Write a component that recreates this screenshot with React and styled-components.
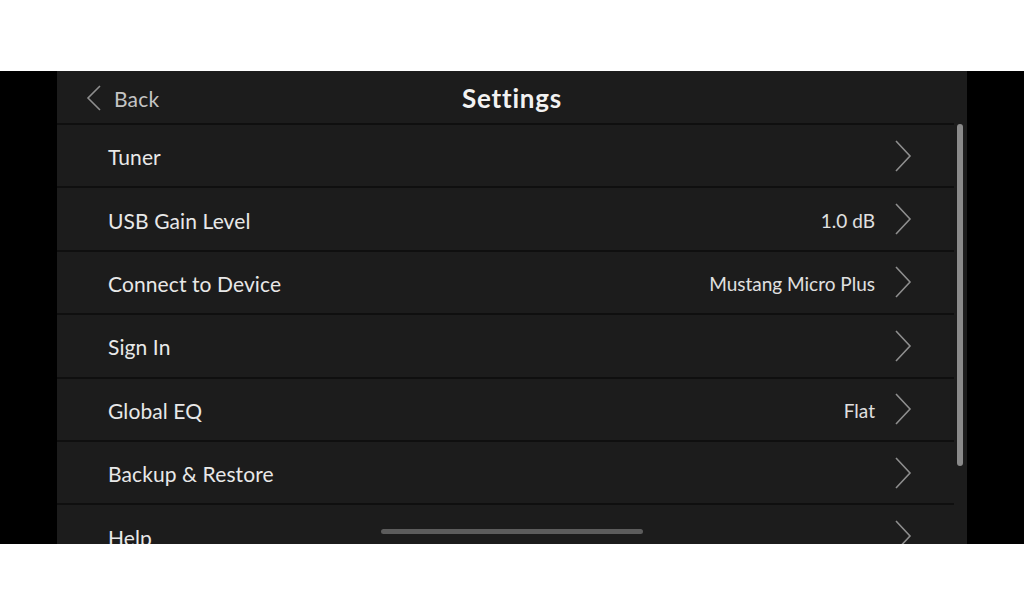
import React from "react";
import styled, { createGlobalStyle } from "styled-components";

const GlobalStyle = createGlobalStyle`
  html, body {
    margin: 0;
    padding: 0;
    background: #ffffff;
  }
  body {
    font-family: "Lato", "Noto Sans", sans-serif;
  }
`;

const rows = [
  { label: "Tuner" },
  { label: "USB Gain Level", value: "1.0 dB" },
  { label: "Connect to Device", value: "Mustang Micro Plus" },
  { label: "Sign In" },
  { label: "Global EQ", value: "Flat" },
  { label: "Backup & Restore" },
  { label: "Help" },
];

function Chevron({ left }) {
  return left ? (
    <svg width="18" height="28" viewBox="0 0 18 28">
      <path d="M15 2 L3 14 L15 26" fill="none" stroke="#8e8e8e" strokeWidth="1.6" />
    </svg>
  ) : (
    <svg width="18" height="34" viewBox="0 0 18 34">
      <path d="M2 2 L16 17 L2 32" fill="none" stroke="#8e8e8e" strokeWidth="1.6" />
    </svg>
  );
}

function App() {
  return (
    <>
      <GlobalStyle />
      <Page>
        <Frame>
          <Panel>
            <Header>
              <BackButton>
                <Chevron left />
                <span>Back</span>
              </BackButton>
              <Title>Settings</Title>
            </Header>
            <List>
              {rows.map((row) => (
                <Row key={row.label}>
                  <Label>{row.label}</Label>
                  {row.value && <Value>{row.value}</Value>}
                  <Arrow>
                    <Chevron />
                  </Arrow>
                </Row>
              ))}
            </List>
            <ScrollBar />
            <HomeIndicator />
          </Panel>
        </Frame>
      </Page>
    </>
  );
}

const Page = styled.div`
  height: 615px;
  padding-top: 71px;
  box-sizing: border-box;
  background: #ffffff;
`;

const Frame = styled.div`
  height: 473px;
  background: #000000;
  display: flex;
  justify-content: center;
`;

const Panel = styled.div`
  position: relative;
  width: 910px;
  height: 100%;
  background: #1c1c1c;
  overflow: hidden;
`;

const Header = styled.div`
  position: relative;
  height: 52px;
  display: flex;
  align-items: center;
  justify-content: center;
  border-bottom: 2px solid #0f0f0f;
  margin-right: 13px;
`;

const BackButton = styled.div`
  position: absolute;
  left: 28px;
  top: 13px;
  display: flex;
  align-items: center;
  gap: 11px;
  color: #c4c4c4;
  font-size: 21px;
  letter-spacing: 0.2px;
  span {
    margin-top: 1px;
  }
`;

const Title = styled.div`
  color: #f2f2f2;
  font-size: 26px;
  font-weight: 700;
  letter-spacing: 0.8px;
  margin-left: 13px;
  margin-top: 1px;
`;

const List = styled.div`
  display: flex;
  flex-direction: column;
  margin-right: 13px;
`;

const Row = styled.div`
  height: 61.4px;
  flex-shrink: 0;
  display: flex;
  align-items: center;
  padding: 0 42px 0 51px;
  border-bottom: 2px solid #0f0f0f;
`;

const Label = styled.div`
  flex: 1;
  color: #e8e8e8;
  font-size: 21px;
  letter-spacing: 0.1px;
  margin-top: 2px;
`;

const Value = styled.div`
  color: #e0e0e0;
  font-size: 19px;
  margin-right: 19px;
  margin-top: 2px;
`;

const Arrow = styled.div`
  width: 18px;
  height: 34px;
  display: flex;
`;

const ScrollBar = styled.div`
  position: absolute;
  right: 4px;
  top: 53px;
  width: 6px;
  height: 342px;
  border-radius: 3px;
  background: #8a8a8a;
`;

const HomeIndicator = styled.div`
  position: absolute;
  left: 324px;
  top: 458px;
  width: 262px;
  height: 5px;
  border-radius: 3px;
  background: #5c5c5c;
`;

export default App;
